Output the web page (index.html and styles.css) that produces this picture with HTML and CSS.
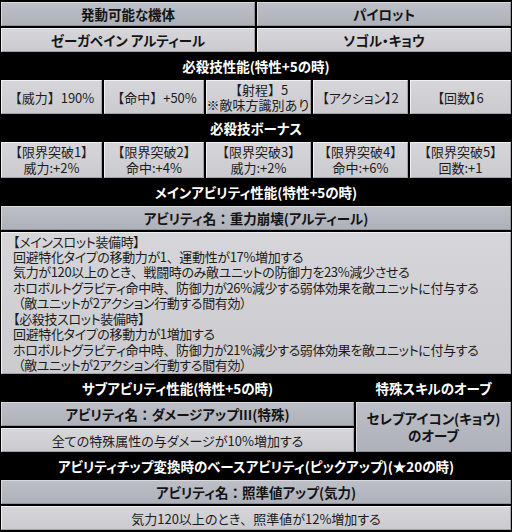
FILE: index.html
```html
<!DOCTYPE html>
<html lang="ja">
<head>
<meta charset="utf-8">
<title>ゼーガペイン アルティール</title>
<link rel="stylesheet" href="styles.css">
</head>
<body>
<div class="sheet">
  <div class="row two">
    <div class="cell head">発動可能な機体</div>
    <div class="cell head">パイロット</div>
  </div>
  <div class="row two">
    <div class="cell light strong">ゼーガペイン アルティール</div>
    <div class="cell light strong">ソゴル・キョウ</div>
  </div>
  <div class="band">必殺技性能(特性+5の時)</div>
  <div class="row five stats">
    <div class="cell light fw">【威力】190%</div>
    <div class="cell light fw">【命中】+50%</div>
    <div class="cell light multi fw"><span>【射程】5</span><span>※敵味方識別あり</span></div>
    <div class="cell light">【アクション】2</div>
    <div class="cell light">【回数】6</div>
  </div>
  <div class="band">必殺技ボーナス</div>
  <div class="row five bonus">
    <div class="cell light multi fw"><span>【限界突破1】</span><span>威力:+2%</span></div>
    <div class="cell light multi fw"><span>【限界突破2】</span><span>命中:+4%</span></div>
    <div class="cell light multi fw"><span>【限界突破3】</span><span>威力:+2%</span></div>
    <div class="cell light multi fw"><span>【限界突破4】</span><span>命中:+6%</span></div>
    <div class="cell light multi fw"><span>【限界突破5】</span><span>回数:+1</span></div>
  </div>
  <div class="band">メインアビリティ性能(特性+5の時)</div>
  <div class="cell head"><span>アビリティ名<span class="fw">：</span>重力崩壊(アルティール)</span></div>
  <div class="cell light desc">
    <div class="line">【メインスロット装備時】</div>
    <div class="line">回避特化タイプの移動力が1<span class="fw">、</span>運動性が17%増加する</div>
    <div class="line">気力が120以上のとき<span class="fw">、</span>戦闘時のみ敵ユニットの防御力を23%減少させる</div>
    <div class="line">ホロボルトグラビティ命中時<span class="fw">、</span>防御力が26%減少する弱体効果を敵ユニットに付与する</div>
    <div class="line indent">（敵ユニットが2アクション行動する間有効）</div>
    <div class="line">【必殺技スロット装備時】</div>
    <div class="line">回避特化タイプの移動力が1増加する</div>
    <div class="line">ホロボルトグラビティ命中時<span class="fw">、</span>防御力が21%減少する弱体効果を敵ユニットに付与する</div>
    <div class="line indent">（敵ユニットが2アクション行動する間有効）</div>
  </div>
  <div class="sub">
    <div class="band">サブアビリティ性能(特性+5の時)</div>
    <div class="band">特殊スキルのオーブ</div>
    <div class="cell head"><span>アビリティ名<span class="fw">：</span>ダメージアップⅢ(特殊)</span></div>
    <div class="cell head multi orb"><span>セレブアイコン(キョウ)</span><span>のオーブ</span></div>
    <div class="cell light"><span>全ての特殊属性の与ダメージが10%増加する</span></div>
  </div>
  <div class="band">アビリティチップ変換時のベースアビリティ(ピックアップ)(★20の時)</div>
  <div class="cell head"><span>アビリティ名<span class="fw">：</span>照準値アップ(気力)</span></div>
  <div class="cell light"><span>気力120以上のとき<span class="fw">、</span>照準値が12%増加する</span></div>
</div>
</body>
</html>
```

FILE: styles.css
```css
html, body {
  margin: 0;
  padding: 0;
  background: #000;
}

body {
  width: 512px;
  height: 532px;
  overflow: hidden;
  font-family: "Noto Sans CJK JP", "Noto Sans", sans-serif;
  font-size: 13px;
  font-feature-settings: "palt";
  color: #1c1c1c;
}

.fw {
  font-feature-settings: normal;
}

.sheet {
  display: flex;
  flex-direction: column;
  gap: 2px;
  padding: 2px 1px 0 1px;
  width: 510px;
}

.row {
  display: grid;
  gap: 2px;
}

.two {
  grid-template-columns: 254px 254px;
}

.five {
  grid-template-columns: 101px 100px 105px 95px 101px;
}

.stats .cell {
  height: 34px;
}

.bonus .cell {
  height: 36px;
}

.cell {
  box-sizing: border-box;
  height: 24px;
  display: flex;
  flex-direction: row;
  align-items: center;
  justify-content: center;
  text-align: center;
  line-height: 15px;
  border: 1px solid;
  white-space: nowrap;
}

.multi {
  flex-direction: column;
  line-height: 15px;
}

.head {
  background: linear-gradient(to bottom, #bcbfc6, #aeb1b9);
  border-color: #d8dadf #8f9299 #8f9299 #d8dadf;
  font-weight: 700;
  font-size: 13.5px;
  color: #141414;
}

.light {
  background: linear-gradient(to bottom, #d6d6da, #cbcbcf);
  border-color: #f0f0f2 #a2a2a6 #a2a2a6 #f0f0f2;
}

.strong {
  font-weight: 700;
  font-size: 13.5px;
  color: #141414;
}

.bonus .multi {
  line-height: 16px;
}

.band {
  height: 24px;
  display: flex;
  align-items: center;
  justify-content: center;
  background: #000;
  color: #fff;
  font-weight: 700;
  font-size: 13.5px;
  white-space: nowrap;
}

.desc {
  height: 142px;
  flex-direction: column;
  align-items: flex-start;
  justify-content: center;
  text-align: left;
  padding-left: 11px;
  line-height: 15.4px;
  letter-spacing: -0.35px;
}

.indent {
  padding-left: 5px;
}

.sub {
  display: grid;
  grid-template-columns: 353px 155px;
  grid-auto-rows: 24px;
  gap: 2px;
}

.orb {
  grid-column: 2;
  grid-row: 2 / span 2;
  height: auto;
  line-height: 17px;
}
```
